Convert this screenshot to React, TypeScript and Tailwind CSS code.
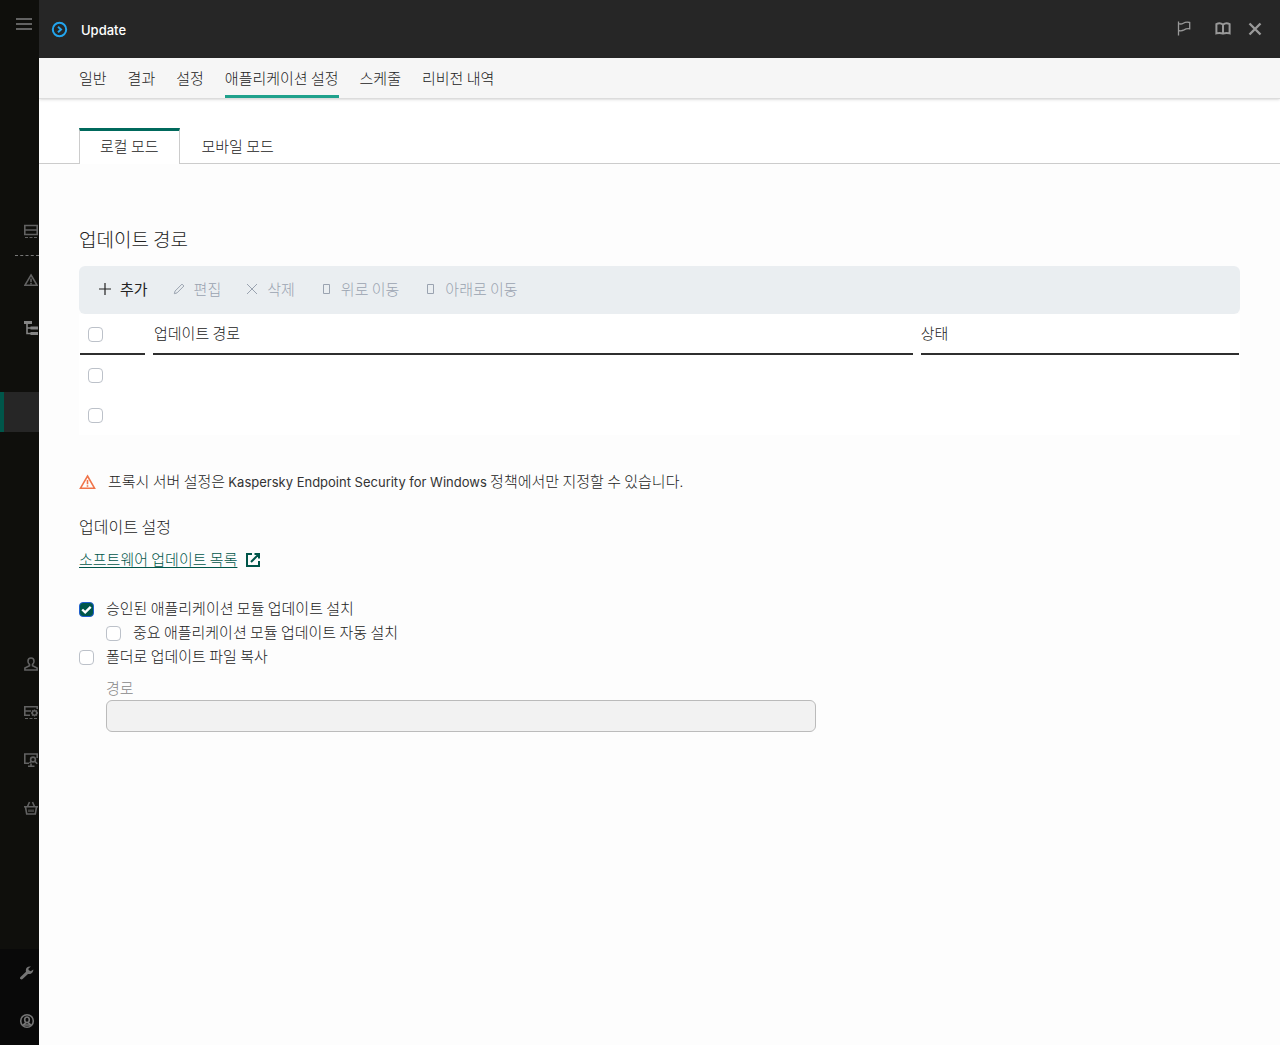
import { useState } from 'react'
import type { InputHTMLAttributes, ReactNode } from 'react'

const navTabs = ['일반', '결과', '설정', '애플리케이션 설정', '스케줄', '리비전 내역']
const modeTabs = ['로컬 모드', '모바일 모드']

export default function App() {
  const [nav, setNav] = useState('애플리케이션 설정')
  const [mode, setMode] = useState('로컬 모드')
  const [install, setInstall] = useState(true)
  const [auto, setAuto] = useState(false)
  const [copy, setCopy] = useState(false)

  return (
    <div className="flex min-h-screen bg-[#fdfdfd] font-['Noto_Sans_CJK_KR',sans-serif] text-[15px] font-light leading-5 text-[#222]">
      <Sidebar />
      <div className="flex min-w-0 flex-1 flex-col">
        <header className="flex h-[58px] shrink-0 items-center bg-[#262626] pl-3 pr-[18px] text-[#999]">
          <svg className="size-[17px] text-[#23a5ee]" viewBox="0 0 17 17" fill="none" stroke="currentColor" strokeWidth="2">
            <circle cx="8.5" cy="8.5" r="6.7" />
            <path d="M7 5.8l3 2.7-3 2.7" />
          </svg>
          <h1 className="ml-[13px] flex-1 pt-px font-['Inter',sans-serif] text-[13px] font-medium text-white">Update</h1>
          <div className="flex items-center">
            <button aria-label="Flag" className="mr-[22px]">
              <svg className="size-4" viewBox="0 0 16 16" fill="none" stroke="currentColor" strokeWidth="1.3">
                <path d="M2.5 .6v14M2.500 2.500c1.600.7 3.200.7 4.800-.3 1.700-1 3.500-1.400 6.400-.7v6.300c-2.300-.5-4.200.2-5.700 1.100-1.800 1-3.700 1.200-5.500.4" />
              </svg>
            </button>
            <button aria-label="Help" className="mr-4">
              <svg className="h-4 w-[18px]" viewBox="0 0 18 16" fill="none" stroke="currentColor" strokeWidth="2">
                <path d="M9 3.600C7.300 2.300 4.200 2.200 2.400 3.200V12.400C4.500 11.800 7 11.800 9 12.700C11 11.800 13.500 11.800 15.600 12.400V3.200C13.800 2.200 10.700 2.300 9 3.600ZM9 3.600V12.700" />
              </svg>
            </button>
            <button aria-label="Close">
              <svg className="size-[14px]" viewBox="0 0 14 14" fill="none" stroke="currentColor" strokeWidth="2.4">
                <path d="M1.5 1.5l11 11M12.5 1.5l-11 11" />
              </svg>
            </button>
          </div>
        </header>

        <nav className="z-10 flex h-[41px] shrink-0 gap-[21px] border-b border-[#dcdcdc] bg-[#f6f6f6] px-10 shadow-sm">
          {navTabs.map((t) => (
            <a
              key={t}
              href="#"
              onClick={() => setNav(t)}
              className={`border-b-3 pt-[10px] ${t === nav ? 'border-[#1fa18c]' : 'border-transparent'}`}
            >
              {t}
            </a>
          ))}
        </nav>

        <div role="tablist" className="flex bg-white pt-[29px]">
          <span className="w-10 border-b border-[#ccc]" />
          {modeTabs.map((t) => (
            <button
              key={t}
              role="tab"
              aria-selected={t === mode}
              onClick={() => setMode(t)}
              className={
                t === mode
                  ? 'h-9 border-x border-t-3 border-x-[#ccc] border-t-[#00695c] px-5 pb-[3px]'
                  : 'h-9 border-b border-[#ccc] px-[22px]'
              }
            >
              {t}
            </button>
          ))}
          <span className="flex-1 border-b border-[#ccc]" />
        </div>

        <main className="px-10 pt-[61px] pb-10">
          <h2 className="text-[19px] leading-7">업데이트 경로</h2>

          <div className="mt-[13px] flex h-12 items-center gap-6 rounded-md bg-[#eaeef1] px-[19px] pb-[2px]">
            <ToolButton label="추가">
              <path d="M7 1v12M1 7h12" />
            </ToolButton>
            <ToolButton label="편집" disabled>
              <path d="M2.3 11.7l.8-2.700L10 2.100l1.900 1.900L5 10.900l-2.700.8z" strokeWidth="1" />
            </ToolButton>
            <ToolButton label="삭제" disabled>
              <path d="M2 2l10 10M12 2L2 12" strokeWidth="1" />
            </ToolButton>
            <ToolButton label="위로 이동" disabled>
              <path d="M4.5 2.5h6v9h-6z" strokeWidth="1" />
            </ToolButton>
            <ToolButton label="아래로 이동" disabled>
              <path d="M4.5 2.5h6v9h-6z" strokeWidth="1" />
            </ToolButton>
          </div>

          <table className="w-full table-fixed bg-white text-left">
            <colgroup>
              <col className="w-[74px]" />
              <col />
              <col className="w-[27.5%]" />
            </colgroup>
            <thead>
              <tr>
                <th className="p-0 pr-2 pl-px">
                  <div className="flex h-[41px] items-center border-b-2 border-[#2f2f2f] pt-[2px] pl-2">
                    <CheckBox aria-label="모두 선택" />
                  </div>
                </th>
                <th className="p-0 pr-2 font-light">
                  <div className="flex h-[41px] items-center border-b-2 border-[#2f2f2f] pb-[2px] pl-px">업데이트 경로</div>
                </th>
                <th className="p-0 pr-px font-light">
                  <div className="flex h-[41px] items-center border-b-2 border-[#2f2f2f] pb-[2px]">상태</div>
                </th>
              </tr>
            </thead>
            <tbody>
              {[1, 2].map((n) => (
                <tr key={n} className="h-10">
                  <td className="p-0 pl-[9px]">
                    <CheckBox aria-label={`행 ${n}`} />
                  </td>
                  <td />
                  <td />
                </tr>
              ))}
            </tbody>
          </table>

          <p className="mt-9 flex items-center gap-3">
            <svg className="h-4 w-[17px] shrink-0 text-[#f0744a]" viewBox="0 0 17 16" fill="none" stroke="currentColor" strokeWidth="1.6">
              <path d="M8.5 2l7 12.200h-14L8.5 2zM8.5 6v4.200M8.5 11.200v1.600" />
            </svg>
            <span>
              프록시 서버 설정은{' '}
              <span className="font-['Inter',sans-serif] text-[13px] font-normal text-[#333]">
                Kaspersky Endpoint Security for Windows
              </span>{' '}
              정책에서만 지정할 수 있습니다.
            </span>
          </p>

          <h3 className="mt-6 text-base leading-5">업데이트 설정</h3>
          <a href="#" className="mt-[13px] flex w-fit items-center gap-2 text-[#00564a]">
            <span className="underline underline-offset-2">소프트웨어 업데이트 목록</span>
            <svg className="mt-[2px] size-4" viewBox="0 0 16 16" fill="none" stroke="currentColor" strokeWidth="2">
              <path d="M7 2H2v12h12V9M9.5 2H14v4.5M13.6 2.4L6 10" />
            </svg>
          </a>

          <div className="mt-[29px] space-y-1">
            <Check label="승인된 애플리케이션 모듈 업데이트 설치" checked={install} onChange={setInstall} />
            <div className="pl-[27px]">
              <Check label="중요 애플리케이션 모듈 업데이트 자동 설치" checked={auto} onChange={setAuto} />
            </div>
            <Check label="폴더로 업데이트 파일 복사" checked={copy} onChange={setCopy} />
          </div>

          <div className="mt-3 max-w-[737px] pl-[27px]">
            <label htmlFor="path" className="block text-[#888]">
              경로
            </label>
            <input
              id="path"
              type="text"
              disabled={!copy}
              className="mt-[2px] block h-8 w-full rounded-md border border-[#bbb] bg-white px-2 disabled:bg-[#f2f2f2]"
            />
          </div>
        </main>
      </div>
    </div>
  )
}

function Sidebar() {
  return (
    <aside className="flex w-[39px] shrink-0 flex-col overflow-hidden bg-[#0f0f0c] text-[#626262]">
      <button aria-label="Menu" className="flex h-12 shrink-0 items-center pl-4">
        <svg className="h-4 w-4" viewBox="0 0 16 16" stroke="currentColor" strokeWidth="2">
          <path d="M0 3h16M0 8h16M0 13h16" />
        </svg>
      </button>

      <div className="mt-[159px]">
        <SideIcon label="Servers">
          <path d="M.8 1.5h12.400v9H.8zM.8 6h12.400" />
          <path d="M1 13.500h3M5.500 13.500h3M10 13.500h3" strokeWidth="1" />
        </SideIcon>
        <div className="ml-[15px] border-t border-dashed border-[#777]" />
        <SideIcon label="Alerts">
          <path d="M7 2l6 10.200H1L7 2zM7 5.500v3.500M7 9.800v1.400" />
        </SideIcon>
        <SideIcon label="Assets" bright>
          <path d="M0 1.500h8" strokeWidth="3" />
          <path d="M3 3v9.500h4M3 7h4" strokeWidth="1.6" />
          <path d="M6.500 7H14M6.500 12.500H14" strokeWidth="3" />
        </SideIcon>
      </div>

      <div className="mt-10 h-10 border-l-4 border-[#00564a] bg-[#262626]" />

      <div className="mt-[208px]">
        <SideIcon label="Users">
          <path d="M7 1C5.100 1 4 2.300 4 4.200c0 1.500.6 2.600 1.500 3.300v1.300L.9 11v2h12.200v-2L8.500 8.800V7.500C9.400 6.800 10 5.700 10 4.200 10 2.300 8.900 1 7 1z" />
        </SideIcon>
        <SideIcon label="Operations">
          <path d="M13.200 4V1.800H.8v8.400H6M.8 6H7" />
          <circle cx="10.5" cy="8" r="2.2" />
          <path d="M10.500 4.500V6M10.500 10v1.500M7 8h1.500M12.500 8H14M8 5.500l1 1M12 9.500l1 1M13 5.500l-1 1M9 9.500l-1 1" strokeWidth="1.3" />
          <path d="M1 13.500h3M5.500 13.500h3M10 13.500h3" strokeWidth="1" />
        </SideIcon>
        <SideIcon label="Discovery">
          <path d="M13.200 5V1H.8v9.200H5M4 13.200h6.500M7 10.500v2.500" />
          <circle cx="9" cy="6.5" r="2.4" />
          <path d="M7.300 8.200L5.500 10M10.700 8.200l2.600 2.600" />
        </SideIcon>
        <SideIcon label="Marketplace">
          <path d="M0 5.800h14M1.500 6l1.200 7h8.600l1.200-7M3.500 5.500L5.500 1M10.500 5.500L8.500 1" />
          <path d="M5 8.500v2.500M7 8.500v2.500M9 8.500v2.500" strokeWidth="1.2" />
        </SideIcon>
      </div>

      <div className="mt-auto bg-[#090909] text-[#757575]">
        <button aria-label="Settings" className="flex h-12 w-full items-center pb-px pl-[19px]">
          <svg className="size-4" viewBox="0 0 16 16">
            <path
              fill="currentColor"
              d="M14.300 4.600l-2.600 1.600-2.200-1.300V3.500l2.500-1.900C9.500.8 6.700 2.500 6.800 5.400c0 .6.100 1 .2 1.400L1.500 11.900c-.7.700-.6 1.600 0 2.100.6.600 1.500.6 2.100 0L9 8.900c2.700.9 5.500-1.200 5.300-4.300z"
            />
          </svg>
        </button>
        <button aria-label="Account" className="flex h-12 w-full items-center pl-[19px]">
          <svg className="size-4" viewBox="0 0 16 16" fill="none" stroke="currentColor" strokeWidth="1.6">
            <circle cx="8" cy="8" r="6.3" />
            <ellipse cx="8" cy="6.8" rx="2.3" ry="2.8" />
            <path d="M3.800 12.500c.8-1.600 2.300-2 3-2.600M12.200 12.500c-.8-1.600-2.300-2-3-2.600M4 12h8" />
          </svg>
        </button>
      </div>
    </aside>
  )
}

function SideIcon({ label, bright, children }: { label: string; bright?: boolean; children: ReactNode }) {
  return (
    <button
      aria-label={label}
      className={`flex h-12 w-full items-center pl-6 ${bright ? 'text-[#858585]' : ''}`}
    >
      <svg className="size-[14px] shrink-0" viewBox="0 0 14 14" fill="none" stroke="currentColor" strokeWidth="1.6">
        {children}
      </svg>
    </button>
  )
}

function ToolButton({ label, disabled, children }: { label: string; disabled?: boolean; children: ReactNode }) {
  return (
    <button disabled={disabled} className="flex items-center gap-2 font-normal disabled:font-light disabled:text-[#9aa3b0]">
      <svg className="size-[14px]" viewBox="0 0 14 14" fill="none" stroke="currentColor" strokeWidth="1.2">
        {children}
      </svg>
      {label}
    </button>
  )
}

function CheckBox(props: InputHTMLAttributes<HTMLInputElement>) {
  return (
    <span className="grid size-[15px] shrink-0">
      <input
        type="checkbox"
        className="peer col-start-1 row-start-1 size-[15px] appearance-none rounded-[4px] border border-[#bcc1c9] bg-white checked:border-[#1f5fd0] checked:bg-[#00564a]"
        {...props}
      />
      <svg
        className="pointer-events-none col-start-1 row-start-1 hidden size-[15px] text-white peer-checked:block"
        viewBox="0 0 15 15"
        fill="none"
        stroke="currentColor"
        strokeWidth="2.4"
      >
        <path d="M3.2 7.5l3 2.9 5.500-5.600" />
      </svg>
    </span>
  )
}

function Check({ label, checked, onChange }: { label: string; checked: boolean; onChange: (v: boolean) => void }) {
  return (
    <label className="flex w-fit items-center gap-3">
      <span className="pt-[2px]">
        <CheckBox checked={checked} onChange={(e) => onChange(e.target.checked)} />
      </span>
      {label}
    </label>
  )
}
